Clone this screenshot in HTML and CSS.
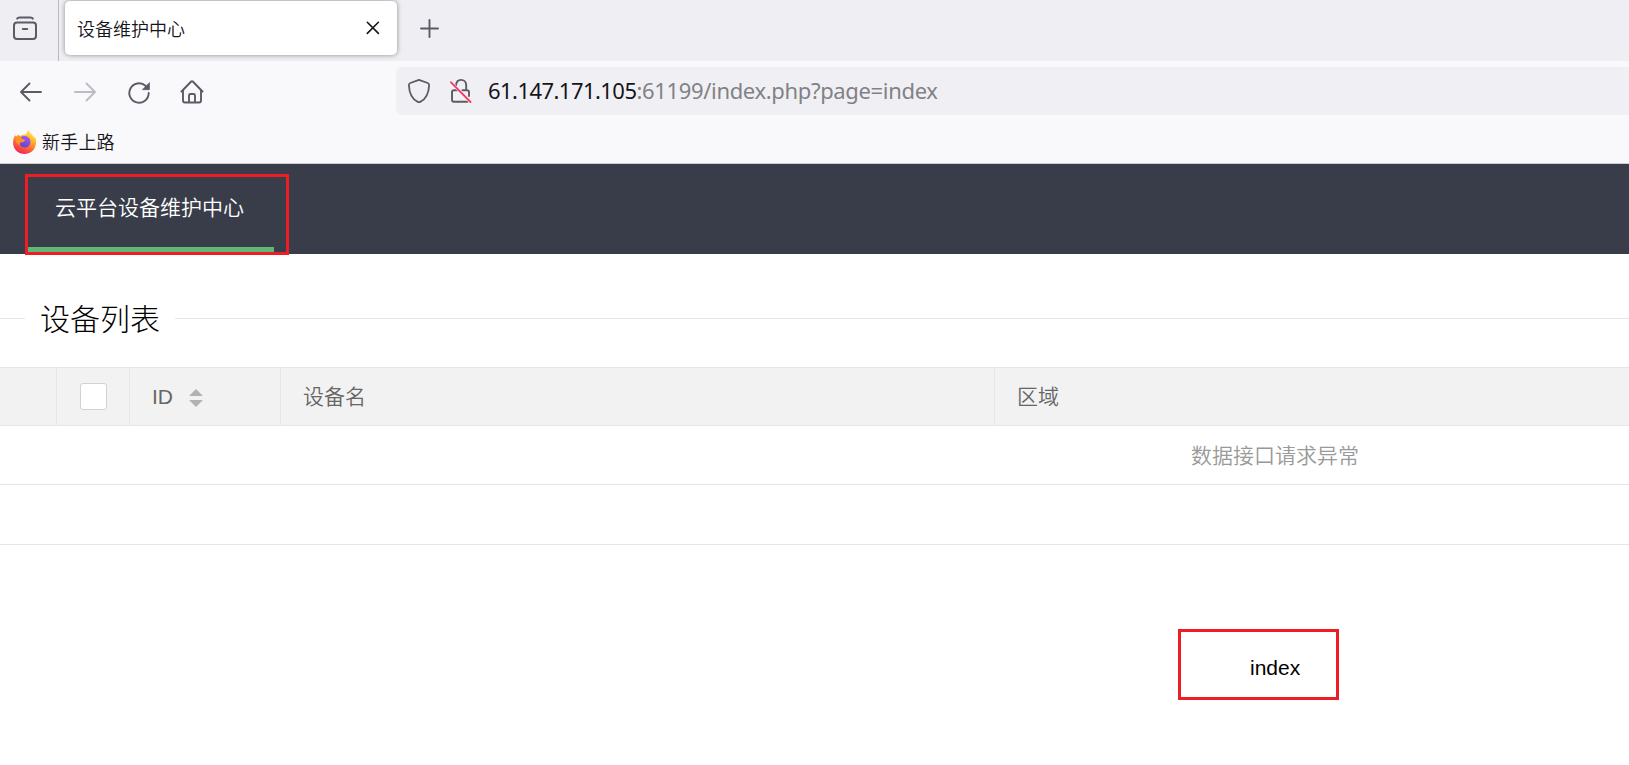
FILE: index.html
```html
<!DOCTYPE html>
<html lang="zh-CN">
<head>
<meta charset="utf-8">
<title>设备维护中心</title>
<link rel="stylesheet" href="styles.css">
</head>
<body>
<div class="tabstrip">
  <div class="history">
    <svg width="24" height="24" viewBox="0 0 24 24" fill="none" stroke="#5b5b66" stroke-width="2" stroke-linecap="round"><rect x="1" y="6.500" width="22" height="16.500" rx="3"/><path d="M4.200 2.600Q4.800 1.500 6.500 1.500H17.500Q19.200 1.500 19.800 2.600"/><path d="M9.800 13H14.200"/></svg>
  </div>
  <div class="tab">
    <span class="tab-title">设备维护中心</span>
    <svg width="14" height="14" viewBox="0 0 14 14" fill="none" stroke="#15141a" stroke-width="1.600" stroke-linecap="round"><path d="M1.300 1.300 12.400 12.400M12.400 1.300 1.300 12.400"/></svg>
  </div>
  <svg class="new-tab" width="19" height="19" viewBox="0 0 19 19" fill="none" stroke="#5b5b66" stroke-width="1.900" stroke-linecap="round"><path d="M9.500 1V18M1 9.500H18"/></svg>
</div>
<div class="toolbar">
  <div class="nav-buttons">
    <svg width="24" height="24" viewBox="0 0 24 24" fill="none" stroke="#5b5b66" stroke-width="1.900" stroke-linecap="round" stroke-linejoin="round"><path d="M22 12H2M10.500 3.500 2 12l8.500 8.500"/></svg>
    <svg width="24" height="24" viewBox="0 0 24 24" fill="none" stroke="#bcbcc2" stroke-width="1.900" stroke-linecap="round" stroke-linejoin="round"><path d="M2 12H22M13.500 3.500 22 12l-8.500 8.500"/></svg>
    <svg width="24" height="24" viewBox="0 0 24 24"><path d="M21.700 13A9.700 9.700 0 1 1 18.500 5.800" fill="none" stroke="#5b5b66" stroke-width="1.900" stroke-linecap="round"/><path d="M22.500 2.500V9.700H15.300Z" fill="#5b5b66" stroke="#5b5b66" stroke-width=".6" stroke-linejoin="round"/></svg>
    <svg class="home" width="24" height="24" viewBox="0 0 24 24" fill="none" stroke="#5b5b66" stroke-width="1.900" stroke-linecap="round" stroke-linejoin="round"><path d="M1.500 11.500 11.200 1.500Q12 .800 12.800 1.500L22.500 11.500M3 10.500V20.500Q3 22.500 5 22.500H19Q21 22.500 21 20.500V10.500M9 22.500V15.500Q9 14 10.500 14H13.500Q15 14 15 15.500V22.500"/></svg>
  </div>
  <div class="urlbar">
    <svg width="24" height="26" viewBox="0 0 24 26" fill="none" stroke="#5b5b66" stroke-width="1.800" stroke-linejoin="round"><path d="M12 1.800 20.700 5Q22.200 5.600 22.100 7.200C21.800 15.500 18 21.500 13.200 23.900Q12 24.500 10.800 23.900C6 21.500 2.200 15.500 1.900 7.200Q1.800 5.600 3.300 5Z"/></svg>
    <svg class="lock" width="24" height="26" viewBox="0 0 24 26" fill="none" stroke="#5b5b66" stroke-width="1.900" stroke-linejoin="round" stroke-linecap="round"><path d="M7 7.300C7.300 4 9.300 1.900 12 1.900 15.200 1.900 17.200 4.300 17.200 7.200V12.200M13.500 12.200H18Q20 12.200 20 14.200V18M8.500 12.200H5Q3 12.200 3 14.200V21.800Q3 23.800 5 23.800H18.500"/><path d="M2 4.300 21 23.800" stroke="#f6eff3" stroke-width="2.800"/><path d="M2 4.300 21.500 24" stroke="#f03c66" stroke-width="1.900"/></svg>
    <span class="url"><span class="host">61.147.171.105</span>:61199/index.php?page=index</span>
  </div>
</div>
<div class="bookmarks">
  <svg width="24" height="24" viewBox="0 0 24 24">
    <defs>
      <linearGradient id="flame" x1=".8" y1="0" x2=".3" y2="1"><stop offset="0" stop-color="#fff04a"/><stop offset=".35" stop-color="#ffb52b"/><stop offset=".65" stop-color="#ff6732"/><stop offset="1" stop-color="#f0205e"/></linearGradient>
      <linearGradient id="globe" x1=".7" y1="0" x2=".2" y2="1"><stop offset="0" stop-color="#a957e8"/><stop offset="1" stop-color="#5148d4"/></linearGradient>
    </defs>
    <path d="M2.200 5.200 3.500 7 5 4.300 6.800 6Q9.500 4.300 13 4.500C13.500 2.500 14.500 1.200 15.700.300 16.200 3.200 20.500 5 21.300 8.200L22 6.500C25 13 22 24 12 24-.500 24-2 11 2.200 5.200Z" fill="url(#flame)"/>
    <path d="M7.500 7.300Q13 4.400 16.500 8.500C19 13 16 18 11.800 17.500 7.800 17.200 6 14.500 7.200 11.500Q8.600 13 10.500 11.700L12.300 10.300Q9.700 9.900 7.500 7.300Z" fill="url(#globe)"/>
    <path d="M2.500 7Q5 4.800 8 7.400 8.600 9.600 12.300 9.900C12 11.300 9.900 11.200 9.200 12.200 6.500 12 6.300 14 7 15.500 4 14 2 11 2.500 7Z" fill="#ff9127"/>
  </svg>
  <span class="bookmark-name">新手上路</span>
</div>
<div class="site-header">
  <div class="site-nav">云平台设备维护中心</div>
  <div class="mark mark-nav"></div>
</div>
<div class="section-title"><span>设备列表</span></div>
<div class="table">
  <div class="thead">
    <div class="cell"></div>
    <div class="cell check-cell"><span class="checkbox"></span></div>
    <div class="cell">ID<span class="sort"><i class="up"></i><i class="down"></i></span></div>
    <div class="cell label">设备名</div>
    <div class="cell label">区域</div>
  </div>
  <div class="row"><span class="message">数据接口请求异常</span></div>
  <div class="row pager"></div>
</div>
<div class="result">index</div>
</body>
</html>
```
FILE: styles.css
```css
* { box-sizing: border-box; }
body {
  margin: 0;
  width: 1629px;
  height: 765px;
  overflow: hidden;
  background: #fff;
  color: #000;
  font-family: "Liberation Sans", "Noto Sans CJK SC", sans-serif;
  font-size: 21px;
}
svg { display: block; flex: none; }
.tabstrip {
  display: flex;
  height: 61px;
  background: #efeef3;
}
.history {
  width: 59px;
  padding: 16px 0 0 13px;
  border-right: 1px solid #b9b9bf;
}
.tab {
  display: flex;
  align-items: center;
  justify-content: space-between;
  width: 332px;
  height: 54px;
  margin: 1px 0 0 6px;
  padding: 0 17px 0 12px;
  background: #fff;
  border-radius: 5px;
  box-shadow: 0 0 5px rgba(0, 0, 0, .42);
}
.tab-title {
  font-family: "Noto Sans CJK SC", sans-serif;
  font-size: 18px;
  font-weight: 350;
  line-height: 54px;
  color: #15141a;
}
.new-tab { margin: 19px 0 0 23px; }
.toolbar {
  display: flex;
  height: 60px;
  padding-top: 6px;
  background: #f9f9fb;
}
.nav-buttons {
  display: flex;
  gap: 30px;
  width: 396px;
  padding: 13px 0 0 19px;
}
.home { margin-left: -1px; }
.urlbar {
  display: flex;
  align-items: center;
  flex: 1;
  height: 48px;
  padding-left: 11px;
  background: #f0f0f4;
  border-radius: 6px 0 0 6px;
}
.lock { margin-left: 18px; }
.url {
  margin-left: 15px;
  padding-bottom: 2px;
  font-family: "Noto Sans", "Open Sans", sans-serif;
  font-size: 22px;
  letter-spacing: -.34px;
  line-height: 46px;
  white-space: nowrap;
  color: #818186;
}
.host { letter-spacing: -.55px; color: #15141a; }
.bookmarks {
  display: flex;
  align-items: center;
  gap: 5px;
  height: 43px;
  padding-left: 13px;
  background: #f9f9fb;
  border-bottom: 1px solid #cccccf;
  font-size: 18px;
  font-weight: 350;
  color: #15141a;
}
.bookmark-name {
  padding-bottom: 2px;
  font-family: "Noto Sans CJK SC", sans-serif;
  letter-spacing: .2px;
}
.site-header {
  position: relative;
  height: 90px;
  padding-left: 25px;
  background: #393d49;
}
.site-nav {
  width: 249px;
  height: 90px;
  padding-left: 30px;
  border-bottom: 7px solid #5fb878;
  font-weight: 350;
  line-height: 88px;
  color: #fff;
}
.mark { border: 3px solid #ee1c25; }
.mark-nav {
  position: absolute;
  left: 25px;
  top: 10px;
  width: 264px;
  height: 81px;
}
.section-title {
  display: flex;
  align-items: center;
  height: 113px;
  padding-top: 15px;
  font-size: 30px;
  font-weight: 300;
}
.section-title::before,
.section-title::after { content: ""; height: 1px; background: #e6e6e6; }
.section-title::before { width: 25px; }
.section-title::after { flex: 1; }
.section-title span { width: 150px; padding: 0 0 2px 15px; }
.thead {
  display: grid;
  grid-template-columns: 57px 73px 151px 714px 1fr;
  height: 59px;
  border-top: 1px solid #e6e6e6;
  border-bottom: 1px solid #e6e6e6;
  background: #f2f2f2;
  color: #666;
}
.cell {
  display: flex;
  align-items: center;
  padding-left: 22px;
  border-right: 1px solid #e6e6e6;
}
.cell:last-child { border-right: 0; }
.check-cell { padding-left: 23px; }
.label { padding-bottom: 4px; font-weight: 350; }
.checkbox {
  width: 27px;
  height: 27px;
  border: 1px solid #d2d2d2;
  border-radius: 3px;
  background: #fff;
}
.sort {
  display: flex;
  flex-direction: column;
  gap: 4px;
  margin: 3px 0 0 16px;
}
.up, .down { border: 7px solid transparent; }
.up { border-top: 0; border-bottom-color: #b2b2b2; }
.down { border-bottom: 0; border-top-color: #b2b2b2; }
.row {
  height: 59px;
  padding-left: 1191px;
  border-bottom: 1px solid #e6e6e6;
  font-weight: 350;
  line-height: 60px;
  color: #999;
}
.pager { height: 60px; }
.result {
  width: 161px;
  height: 71px;
  margin: 84px 0 0 1178px;
  padding-left: 69px;
  border: 3px solid #ee1c25;
  line-height: 71px;
}
```
